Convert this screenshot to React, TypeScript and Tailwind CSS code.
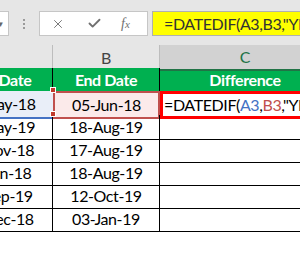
import { Check, X } from 'lucide-react';

const rows = [
    ['15-May-18', '05-Jun-18'],
    ['22-May-19', '18-Aug-19'],
    ['12-Nov-18', '17-Aug-19'],
    ['10-Jun-18', '18-Aug-19'],
    ['05-Sep-19', '12-Oct-19'],
    ['20-Dec-18', '03-Jan-19'],
];

const cols = 'grid grid-cols-[111px_107px_170px] -ml-[58px]';

export default function App() {
    return (
        <div className="relative h-[255px] w-[300px] overflow-hidden bg-white font-['Lato',sans-serif] text-[16px] tracking-[-0.4px] text-black">
            {/* formula bar */}
            <div className="flex h-[45px] items-start bg-[#e6e6e6] pt-[11px]">
                <div className="-ml-[40px] flex h-[25px] w-[49px] items-center justify-end border border-[#c6c6c6] bg-white pr-[4px]">
                    <span className="text-[8px] leading-none text-[#666]">▼</span>
                </div>
                <div className="ml-[14px] flex h-[25px] flex-col justify-center gap-[2px]">
                    <span className="block h-[2px] w-[2px] bg-[#9a9a9a]" />
                    <span className="block h-[2px] w-[2px] bg-[#9a9a9a]" />
                    <span className="block h-[2px] w-[2px] bg-[#9a9a9a]" />
                </div>
                <div className="ml-[14px] flex h-[25px] w-[109px] items-center border border-[#c6c6c6] bg-white text-[#707070]">
                    <X className="ml-[11px] size-[14px]" strokeWidth={1.6} />
                    <Check className="ml-[22px] size-[15px]" strokeWidth={3} />
                    <span className="ml-[19px] font-['Liberation_Serif',serif] text-[14px] italic tracking-normal">
                        f<span className="text-[11px]">x</span>
                    </span>
                </div>
                <div className="ml-[4px] flex h-[25px] flex-1 items-center overflow-hidden whitespace-nowrap border border-r-0 border-[#b0b0b0] bg-[#ffff00] pl-[11px] text-[#333]">
                    =DATEDIF(A3,B3,"YM")
                </div>
            </div>

            {/* column headers */}
            <div className={`${cols} h-[23px] bg-[#e6e6e6] text-[#444]`}>
                <div className="border-r border-[#bdbdbd]" />
                <div className="flex items-center justify-center border-r border-[#bdbdbd]">
                    B
                </div>
                <div className="flex items-center justify-center border-b-2 border-[#217346] bg-[#d2d2d2] text-[#217346]">
                    C
                </div>
            </div>

            {/* table */}
            <div className={`${cols} h-[23px] bg-[#00b050] font-bold text-white`}>
                <div className="flex items-center justify-center border-r border-black">
                    Start Date
                </div>
                <div className="flex items-center justify-center border-r border-black">
                    End Date
                </div>
                <div className="flex items-center justify-center">
                    Difference
                </div>
            </div>

            {rows.map(([start, end], i) =>
                i === 0 ? (
                    <div key={i} className={`${cols} h-[24px]`}>
                        <div className="flex items-center justify-center border-b-2 border-[#4472c4] bg-[#e9eef8]">
                            {start}
                        </div>
                        <div className="flex items-center justify-center border-2 border-[#c0504d] bg-[#fbeaea]">
                            {end}
                        </div>
                        <div className="flex items-center overflow-hidden whitespace-nowrap border-[3px] border-r-0 border-[#ff0000] pl-[1px]">
                            =DATEDIF(<span className="text-[#4472c4]">A3</span>,
                            <span className="text-[#c0504d]">B3</span>,"YM")
                        </div>
                    </div>
                ) : (
                    <div key={i} className={`${cols} h-[23px]`}>
                        <div className="flex items-center justify-center border-r border-b border-black">
                            {start}
                        </div>
                        <div className="flex items-center justify-center border-r border-b border-black">
                            {end}
                        </div>
                        <div className="border-b border-black" />
                    </div>
                ),
            )}

            {/* selection handles */}
            <span className="absolute left-[50px] top-[87px] h-[6px] w-[6px] border border-white bg-[#c0392b]" />
            <span className="absolute left-[50px] top-[111px] h-[6px] w-[6px] border border-white bg-[#c0392b]" />
        </div>
    );
}
